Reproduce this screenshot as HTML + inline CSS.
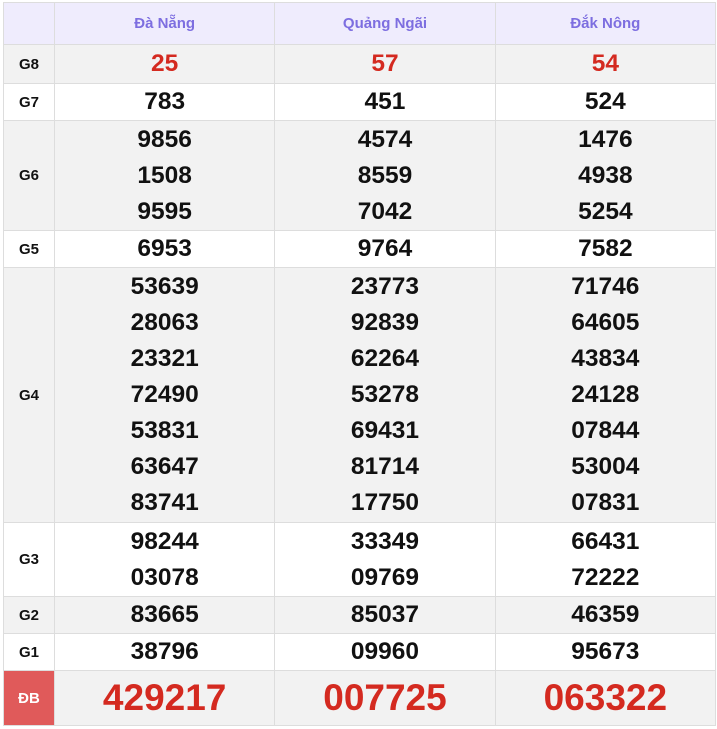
<!DOCTYPE html><html><head><style>
body{margin:0;background:#fff;font-family:"Liberation Sans",Arial,sans-serif;}
table{position:absolute;left:3px;top:2px;border-collapse:collapse;width:713px;table-layout:fixed}
td,th{border:1px solid #ddd;text-align:center;padding:0;font-weight:bold}
th{background:#efecfd;color:#7d6ee0;font-size:15px;height:41px}
td.l{font-size:15px;color:#111;width:50px}
td.n{font-size:24.5px;color:#111;line-height:36px}
tr.g td{background:#f2f2f2}
.r{color:#d42a20!important}
.db td.n{font-size:37px;line-height:52px}
.db td.l{background:#e05a5a!important;color:#fff}
</style></head><body>
<table>
<tr><th style="width:50px"></th><th>Đà Nẵng</th><th>Quảng Ngãi</th><th>Đắk Nông</th></tr>
<tr class="g" style="height:39px"><td class="l">G8</td><td class="n r">25</td><td class="n r">57</td><td class="n r">54</td></tr>
<tr style="height:37px"><td class="l">G7</td><td class="n">783</td><td class="n">451</td><td class="n">524</td></tr>
<tr class="g" style="height:110px"><td class="l">G6</td><td class="n">9856<br>1508<br>9595</td><td class="n">4574<br>8559<br>7042</td><td class="n">1476<br>4938<br>5254</td></tr>
<tr style="height:37px"><td class="l">G5</td><td class="n">6953</td><td class="n">9764</td><td class="n">7582</td></tr>
<tr class="g" style="height:255px"><td class="l">G4</td><td class="n">53639<br>28063<br>23321<br>72490<br>53831<br>63647<br>83741</td><td class="n">23773<br>92839<br>62264<br>53278<br>69431<br>81714<br>17750</td><td class="n">71746<br>64605<br>43834<br>24128<br>07844<br>53004<br>07831</td></tr>
<tr style="height:74px"><td class="l">G3</td><td class="n">98244<br>03078</td><td class="n">33349<br>09769</td><td class="n">66431<br>72222</td></tr>
<tr class="g" style="height:37px"><td class="l">G2</td><td class="n">83665</td><td class="n">85037</td><td class="n">46359</td></tr>
<tr style="height:37px"><td class="l">G1</td><td class="n">38796</td><td class="n">09960</td><td class="n">95673</td></tr>
<tr class="g db" style="height:55px"><td class="l">ĐB</td><td class="n r">429217</td><td class="n r">007725</td><td class="n r">063322</td></tr>
</table>
</body></html>
